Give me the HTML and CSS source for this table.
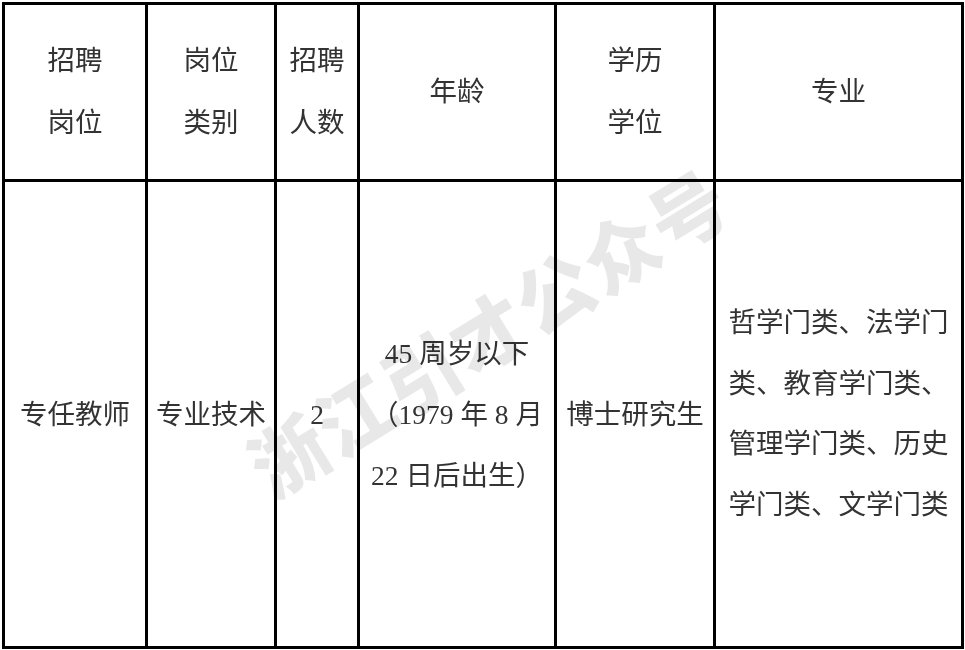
FILE: index.html
```html
<!DOCTYPE html>
<html lang="zh">
<head>
<meta charset="utf-8">
<link rel="stylesheet" href="styles.css">
</head>
<body>
<div class="page">
  <div class="grid">
    <div class="cell">招聘<br>岗位</div>
    <div class="cell">岗位<br>类别</div>
    <div class="cell">招聘<br>人数</div>
    <div class="cell">年龄</div>
    <div class="cell">学历<br>学位</div>
    <div class="cell">专业</div>

    <div class="cell body">专任教师</div>
    <div class="cell body">专业技术</div>
    <div class="cell body">2</div>
    <div class="cell body">45 周岁以下<br>（1979 年 8 月<br>22 日后出生）</div>
    <div class="cell body">博士研究生</div>
    <div class="cell body major">哲学门类、法学门类、教育学门类、管理学门类、历史学门类、文学门类</div>
  </div>
  <div class="watermark">浙江引才公众号</div>
</div>
</body>
</html>
```

FILE: styles.css
```css
html, body {
  margin: 0;
  padding: 0;
  background: #ffffff;
}

.page {
  position: relative;
  width: 965px;
  height: 650px;
  overflow: hidden;
}

.grid {
  margin: 2px 0 0 2px;
  width: 962px;
  height: 647px;
  box-sizing: border-box;
  display: grid;
  grid-template-columns: 140px 126px 80px 194px 156px 245px;
  grid-template-rows: 174px 464px;
  gap: 3px;
  padding: 3px;
  background: #000000;
}

.cell {
  background: #ffffff;
  display: flex;
  align-items: center;
  justify-content: center;
  text-align: center;
  font-family: "Liberation Serif", "Noto Sans CJK SC", serif;
  font-size: 27.5px;
  line-height: 62px;
  color: #333333;
}

.body {
  line-height: 61px;
}

.major {
  padding: 0 10px;
  line-height: 60.5px;
}

.watermark {
  position: absolute;
  left: 487px;
  top: 330px;
  transform: translate(-50%, -50%) rotate(-31.5deg);
  font-family: "Noto Sans CJK SC", sans-serif;
  font-weight: 900;
  font-size: 76px;
  letter-spacing: 2px;
  white-space: nowrap;
  color: rgba(0, 0, 0, 0.09);
  mix-blend-mode: multiply;
  pointer-events: none;
}
```
